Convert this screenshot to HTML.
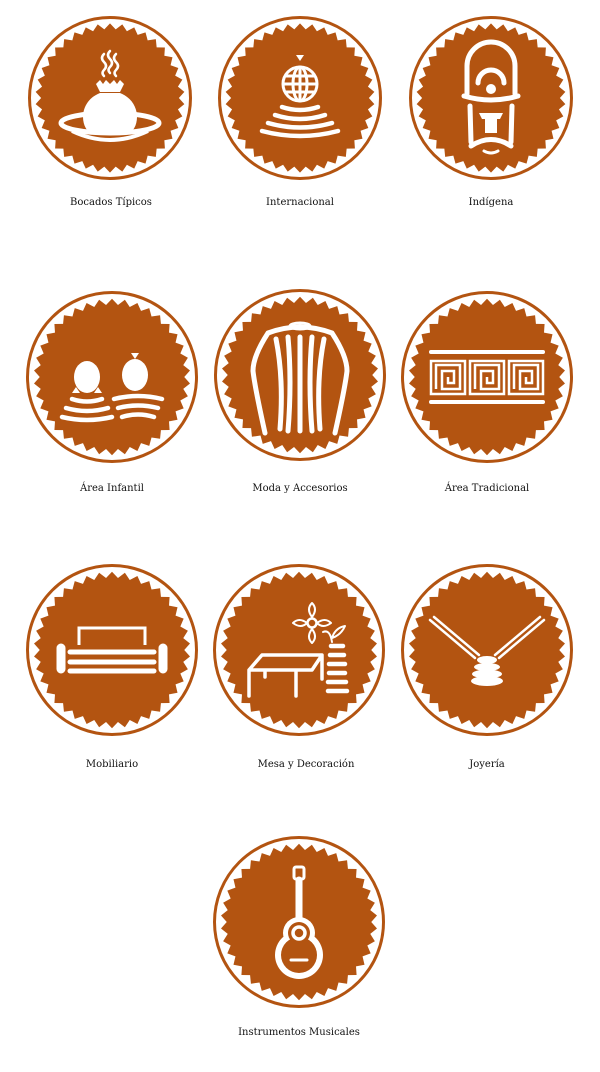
<!DOCTYPE html>
<html><head><meta charset="utf-8">
<style>
html,body{margin:0;padding:0;background:#fff;width:600px;height:1072px;overflow:hidden;position:relative}
svg.b{position:absolute}
.l{position:absolute;font-family:"DejaVu Serif","Liberation Serif",serif;font-size:10px;color:#111;text-align:center;width:200px;white-space:nowrap}
</style></head><body>
<svg width="0" height="0" style="position:absolute">
<defs>
<polygon id="star" fill="#b35411" points=""/>
</defs>
</svg>

<!-- Row 1 -->
<svg class="b" style="left:28px;top:16px" width="164" height="164" viewBox="-82 -82 164 164">
<circle r="80.5" fill="none" stroke="#b35411" stroke-width="3"/><use href="#star" transform="scale(0.82)"/>
<g fill="none" stroke="#fff" stroke-width="2.5" stroke-linecap="round">
<path d="M-6,-44 q-4,4 0,8 q4,4 0,8 q-3,3 0,6"/><path d="M0,-47 q-4,4 0,8 q4,4 0,8 q-3,3 0,6"/><path d="M6,-44 q-4,4 0,8 q4,4 0,8 q-3,3 0,6"/>
</g>
<g fill="#fff">
<path d="M-14,-14 l4,-4 3,4 3,-4 4,4 4,-4 3,4 3,-4 4,4 -4,8 h-20z"/>
<path d="M-10,-5 h20 c20,8 20,30 12,38 h-44 c-8,-8 -8,-30 12,-38z"/>
</g>
<g fill="none" stroke="#fff" stroke-width="5">
<ellipse cx="0" cy="25" rx="49" ry="10"/>
<path d="M-38,33 q38,18 76,0" stroke-width="4"/>
</g>
</svg>

<svg class="b" style="left:218px;top:16px" width="164" height="164" viewBox="-82 -82 164 164">
<circle r="80.5" fill="none" stroke="#b35411" stroke-width="3"/><use href="#star" transform="scale(0.82)"/>
<path d="M-4,-43 h8 l-4,6z" fill="#fff"/>
<g fill="none" stroke="#fff" stroke-width="3">
<circle cx="0" cy="-14" r="17"/><ellipse cx="0" cy="-14" rx="7" ry="17"/>
<path d="M-17,-14 h34 M-14,-22 h28 M-14,-6 h28 M0,-31 v34"/>
</g>
<g fill="none" stroke="#fff" stroke-width="4.5" stroke-linecap="round">
<path d="M-18,9 q18,6 36,0"/><path d="M-25,17 q25,8 50,0"/><path d="M-32,25 q32,9 64,0"/><path d="M-38,33 q38,10 76,0"/>
</g>
</svg>

<svg class="b" style="left:409px;top:16px" width="164" height="164" viewBox="-82 -82 164 164">
<circle r="80.5" fill="none" stroke="#b35411" stroke-width="3"/><use href="#star" transform="scale(0.82)"/>
<g fill="none" stroke="#fff" stroke-width="5" stroke-linecap="round">
<path d="M-24,-4 v-28 a24,24 0 0 1 48,0 v28"/>
<path d="M-13,-15 a13,13 0 0 1 26,0"/>
<path d="M-27,-2 q27,8 54,0"/>
<path d="M-21,8 l1,36 M21,8 l-1,36"/>
<path d="M-20,48 q20,-13 40,0"/>
<path d="M-7,53 q7,4 14,0" stroke-width="3"/>
</g>
<circle cx="0" cy="-9" r="5" fill="#fff"/>
<path d="M-12,15 h24 l-3,6 h-3 v14 h-12 v-14 h-3z" fill="#fff"/>
</svg>

<!-- Row 2 -->
<svg class="b" style="left:26px;top:291px" width="172" height="172" viewBox="-86 -86 172 172">
<circle r="84.5" fill="none" stroke="#b35411" stroke-width="3"/><use href="#star" transform="scale(0.86)"/>
<g fill="#fff"><ellipse cx="-25" cy="0" rx="13" ry="16"/><ellipse cx="23" cy="-2" rx="13" ry="16"/>
<path d="M19,-24 h8 l-4,6z"/><path d="M-40,16 l4,-6 4,6z M-18,16 l4,-6 4,6z"/></g>
<g fill="none" stroke="#fff" stroke-width="4.5" stroke-linecap="round">
<path d="M-40,22 q15,5 30,0"/><path d="M-46,31 q21,6 42,0"/><path d="M-50,40 q25,6 50,0"/>
<path d="M2,22 q24,-6 48,0"/><path d="M6,31 q20,-5 40,0"/><path d="M10,40 q16,-5 32,0"/>
</g>
</svg>

<svg class="b" style="left:214px;top:289px" width="172" height="172" viewBox="-86 -86 172 172">
<circle r="84.5" fill="none" stroke="#b35411" stroke-width="3"/><use href="#star" transform="scale(0.86)"/>
<g fill="none" stroke="#fff" stroke-width="5" stroke-linecap="round">
<path d="M-35,58 q-10,-45 -12,-62 q0,-15 15,-38 q32,-12 64,0 q15,23 15,38 q-2,17 -12,62"/>
<ellipse cx="0" cy="-49" rx="10" ry="3" stroke-width="3"/>
<path d="M-24,-36 q8,40 4,90"/><path d="M-12,-38 q4,45 0,94"/><path d="M0,-38 v94"/><path d="M12,-38 q-4,45 0,94"/><path d="M24,-36 q-8,40 -4,90"/>
</g>
</svg>

<svg class="b" style="left:401px;top:291px" width="172" height="172" viewBox="-86 -86 172 172">
<circle r="84.5" fill="none" stroke="#b35411" stroke-width="3"/><use href="#star" transform="scale(0.86)"/>
<g fill="none" stroke="#fff" stroke-width="4" stroke-linecap="round">
<path d="M-56,-25 h112 M-56,25 h112"/>
</g>
<g fill="none" stroke="#fff" stroke-width="2.5">
<path id="sp" d="M-56,-16 h34 v33 h-34 z M-51,12 v-24 h24 v24 h-18 v-18 h12 v12 h-6 v-6"/>
<use href="#sp" x="39"/><use href="#sp" x="78"/>
</g>
</svg>

<!-- Row 3 -->
<svg class="b" style="left:26px;top:564px" width="172" height="172" viewBox="-86 -86 172 172">
<circle r="84.5" fill="none" stroke="#b35411" stroke-width="3"/><use href="#star" transform="scale(0.86)"/>
<path d="M-33,-5 v-17 h66 v17" fill="none" stroke="#fff" stroke-width="3"/>
<g fill="none" stroke="#fff" stroke-width="5" stroke-linecap="round">
<path d="M-42,2 h84 M-42,12 h84 M-42,21 h84"/>
<path d="M-51,-2 v21 M51,-2 v21" stroke-width="9"/>
</g>
</svg>

<svg class="b" style="left:213px;top:564px" width="172" height="172" viewBox="-86 -86 172 172">
<circle r="84.5" fill="none" stroke="#b35411" stroke-width="3"/><use href="#star" transform="scale(0.86)"/>
<g fill="none" stroke="#fff" stroke-width="3.5" stroke-linecap="round" stroke-linejoin="round">
<path d="M-50,46 v-26 l13,-15 h60 l-10,15 h-63 M-3,20 v26 M23,5 v24 M-34,20 v7"/>
<circle cx="13" cy="-27" r="4.5" stroke-width="2.5"/>
<path d="M13,-33 q-6,-8 0,-14 q6,6 0,14 M18,-27 q8,-6 14,0 q-8,6 -14,0 M13,-21 q-6,8 0,14 q6,-6 0,-14 M8,-27 q-8,-6 -14,0 q8,6 14,0" stroke-width="2"/>
<path d="M24,-18 q7,-3 9,10 M33,-12 q3,-10 13,-12 q-4,9 -13,12" stroke-width="2"/>
</g>
<g fill="none" stroke="#fff" stroke-width="4.5" stroke-linecap="round">
<path d="M32,-4 h12 M31,5 h14 M30,14 h16 M30,23 h16 M29,32 h18 M29,41 h19"/>
</g>
</svg>

<svg class="b" style="left:401px;top:564px" width="172" height="172" viewBox="-86 -86 172 172">
<circle r="84.5" fill="none" stroke="#b35411" stroke-width="3"/><use href="#star" transform="scale(0.86)"/>
<g fill="none" stroke="#fff" stroke-width="2.5" stroke-linecap="round">
<path d="M-57,-30 l45,38 M-53,-33 l45,38 M57,-30 l-45,38 M53,-33 l-45,38"/>
</g>
<g fill="#fff"><ellipse cx="0" cy="10" rx="10" ry="4"/><ellipse cx="0" cy="17" rx="13" ry="4"/><ellipse cx="0" cy="24" rx="15" ry="4.5"/><ellipse cx="0" cy="31" rx="16" ry="5"/></g>
</svg>

<!-- Row 4 -->
<svg class="b" style="left:213px;top:836px" width="172" height="172" viewBox="-86 -86 172 172">
<circle r="84.5" fill="none" stroke="#b35411" stroke-width="3"/><use href="#star" transform="scale(0.86)"/>
<g fill="none" stroke="#fff" stroke-linecap="round">
<rect x="-5" y="-55" width="10" height="12" rx="2" stroke-width="3"/>
<path d="M0,-42 v38" stroke-width="7"/>
</g>
<circle cx="0" cy="11" r="16" fill="#fff"/>
<circle cx="0" cy="33" r="24" fill="#fff"/>
<circle cx="0" cy="11" r="11" fill="#b35411"/>
<circle cx="0" cy="33" r="18" fill="#b35411"/>
<rect x="-9" y="12" width="18" height="10" fill="#b35411"/>
<circle cx="0" cy="11" r="6" fill="none" stroke="#fff" stroke-width="3.5"/>
<path d="M-8,38 h16" stroke="#fff" stroke-width="3" stroke-linecap="round"/>
</svg>

<div class="l" style="left:11px;top:197px">Bocados Típicos</div>
<div class="l" style="left:200px;top:197px">Internacional</div>
<div class="l" style="left:391px;top:197px">Indígena</div>
<div class="l" style="left:12px;top:483px">Área Infantil</div>
<div class="l" style="left:200px;top:483px">Moda y Accesorios</div>
<div class="l" style="left:387px;top:483px">Área Tradicional</div>
<div class="l" style="left:12px;top:759px">Mobiliario</div>
<div class="l" style="left:206px;top:759px">Mesa y Decoración</div>
<div class="l" style="left:387px;top:759px">Joyería</div>
<div class="l" style="left:199px;top:1027px">Instrumentos Musicales</div>

<script>
(function(){var n=38,p=[];for(var i=0;i<n*2;i++){var a=Math.PI*i/n-Math.PI/2,r=(i%2==0)?91:84;p.push((r*Math.cos(a)).toFixed(2)+","+(r*Math.sin(a)).toFixed(2));}
document.getElementById("star").setAttribute("points",p.join(" "));})();
</script>
</body></html>
